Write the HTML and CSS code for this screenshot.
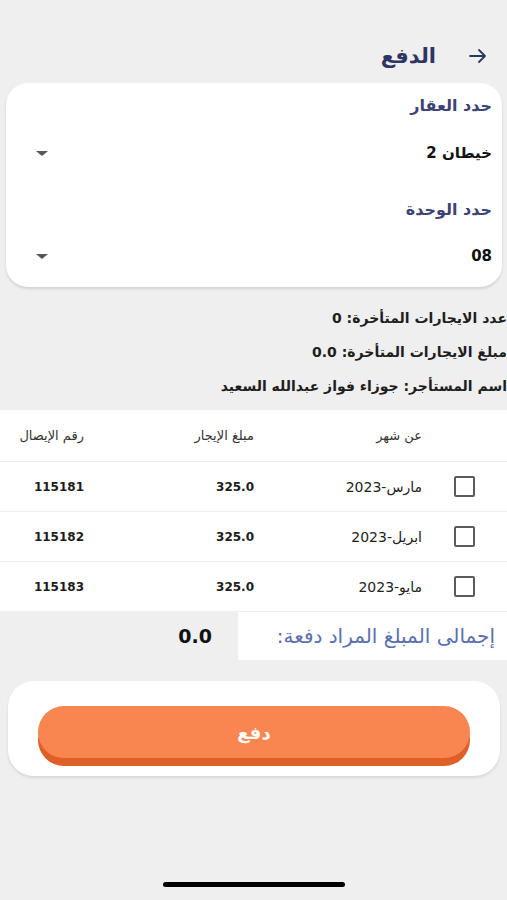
FILE: index.html
```html
<!DOCTYPE html>
<html lang="ar" dir="rtl">
<head>
    <meta charset="UTF-8">
    <meta name="viewport" content="width=device-width, initial-scale=1.0">
    <title>الدفع</title>
    <link rel="stylesheet" href="styles.css">
</head>
<body>
    <div class="screen">
        <div class="topbar">
            <span class="back">
                <svg width="20" height="18" viewBox="0 0 20 18">
                    <path d="M2 9 H17 M11 3 L17 9 L11 15" fill="none" stroke="#2e3560" stroke-width="1.8" stroke-linecap="round" stroke-linejoin="round"/>
                </svg>
            </span>
            <h1 class="title">الدفع</h1>
        </div>

        <div class="card">
            <div class="field">
                <div class="field-label">حدد العقار</div>
                <div class="select">
                    <span>خيطان 2</span>
                    <span class="caret"></span>
                </div>
            </div>
            <div class="field second">
                <div class="field-label">حدد الوحدة</div>
                <div class="select">
                    <span>08</span>
                    <span class="caret"></span>
                </div>
            </div>
        </div>

        <div class="info">
            <p>عدد الايجارات المتأخرة: 0</p>
            <p>مبلغ الايجارات المتأخرة: 0.0</p>
            <p>اسم المستأجر: جوزاء فواز عبدالله السعيد</p>
        </div>

        <div class="table">
            <div class="row head">
                <div class="cell"></div>
                <div class="cell">عن شهر</div>
                <div class="cell">مبلغ الإيجار</div>
                <div class="cell">رقم الإيصال</div>
            </div>
            <div class="row">
                <div class="cell check-cell"><span class="check"></span></div>
                <div class="cell month">مارس-2023</div>
                <div class="cell num">325.0</div>
                <div class="cell num">115181</div>
            </div>
            <div class="row">
                <div class="cell check-cell"><span class="check"></span></div>
                <div class="cell month">ابريل-2023</div>
                <div class="cell num">325.0</div>
                <div class="cell num">115182</div>
            </div>
            <div class="row">
                <div class="cell check-cell"><span class="check"></span></div>
                <div class="cell month">مايو-2023</div>
                <div class="cell num">325.0</div>
                <div class="cell num">115183</div>
            </div>
        </div>

        <div class="total">
            <div class="total-label">إجمالى المبلغ المراد دفعة:</div>
            <div class="total-value">0.0</div>
        </div>

        <div class="pay-card">
            <button class="pay-btn">دفع</button>
        </div>

        <div class="home-bar"></div>
    </div>
</body>
</html>
```

FILE: styles.css
```css
* {
    box-sizing: border-box;
}
body {
    margin: 0;
    padding: 0;
    background-color: #efefef;
    font-family: "DejaVu Sans", "Noto Sans", sans-serif;
    color: #1c1c1c;
    overflow: hidden;
}
.screen {
    width: 507px;
    height: 900px;
    overflow: hidden;
}
.topbar {
    display: flex;
    align-items: center;
    gap: 32px;
    padding: 40px 19px 0 0;
    height: 72px;
}
.back {
    display: flex;
    align-items: center;
}
.title {
    margin: 0;
    font-size: 21px;
    font-weight: bold;
    color: #2e3560;
}
.card {
    background: white;
    margin: 11px 5px 0 6px;
    padding: 12px 10px 20px 30px;
    border-radius: 22px;
    box-shadow: 0 2px 3px rgba(0, 0, 0, 0.12);
}
.field-label {
    font-size: 16px;
    font-weight: bold;
    line-height: 22px;
    color: #3c4373;
}
.select {
    display: flex;
    justify-content: space-between;
    align-items: center;
    margin-top: 25px;
    line-height: 22px;
    font-size: 15px;
    font-weight: bold;
    color: #111;
}
.field.second {
    margin-top: 35px;
}
.field.second .select {
    margin-top: 24px;
}
.caret {
    width: 0;
    height: 0;
    border-left: 6px solid transparent;
    border-right: 6px solid transparent;
    border-top: 5px solid #555;
}
.info {
    margin-top: 14px;
}
.info p {
    margin: 0;
    line-height: 34px;
    font-size: 14px;
    font-weight: bold;
    color: #1e1e1e;
    white-space: nowrap;
}
.table {
    background: white;
    margin-top: 7px;
}
.row {
    display: grid;
    grid-template-columns: 85px 168px 170px 84px;
    height: 50px;
    align-items: center;
    border-top: 1px solid #ececec;
    font-size: 12px;
    font-weight: bold;
}
.row.head {
    height: 51px;
    border-top: none;
    font-weight: normal;
    font-size: 13px;
    color: #333;
}
.cell.month {
    font-size: 14px;
    font-weight: normal;
    color: #222;
}
.check-cell {
    display: flex;
    justify-content: center;
}
.check {
    width: 21px;
    height: 21px;
    border: 2px solid #5b5b5b;
    border-radius: 2px;
}
.total {
    display: flex;
    align-items: center;
    margin-top: 1px;
    height: 48px;
}
.total-label {
    background: white;
    width: 269px;
    height: 48px;
    line-height: 48px;
    padding-right: 12px;
    font-size: 20px;
    color: #5a6fae;
    white-space: nowrap;
}
.total-value {
    margin-right: 26px;
    font-size: 19px;
    font-weight: bold;
    color: #111;
}
.pay-card {
    background: white;
    margin: 21px 7px 0 8px;
    padding: 25px 30px 18px;
    border-radius: 26px;
    box-shadow: 0 2px 3px rgba(0, 0, 0, 0.1);
}
.pay-btn {
    display: block;
    width: 100%;
    height: 52px;
    border: none;
    border-radius: 26px;
    background-color: #f98550;
    box-shadow: 0 8px 0 #de6027;
    color: white;
    font-family: inherit;
    font-size: 18px;
    font-weight: bold;
}
.home-bar {
    width: 182px;
    height: 5px;
    margin: 106px auto 0;
    background: #000;
    border-radius: 3px;
}
```
